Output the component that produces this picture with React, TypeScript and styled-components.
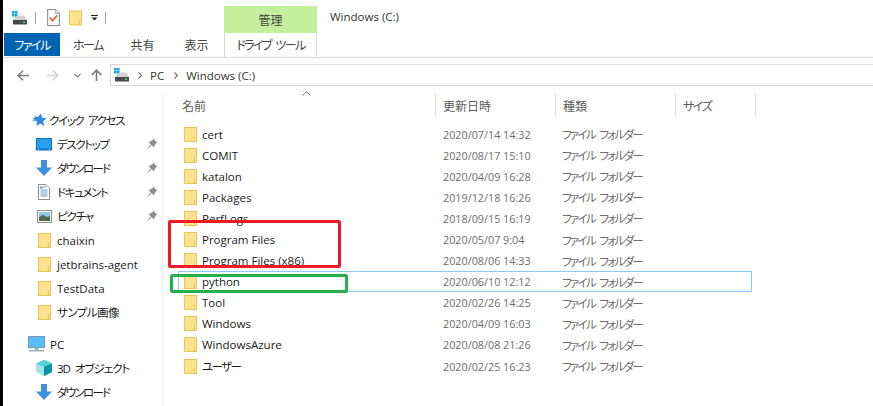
import styled, { createGlobalStyle } from "styled-components";

const GlobalStyle = createGlobalStyle`
    html, body {
        margin: 0;
        padding: 0;
        background: #ffffff;
    }
    body {
        font-family: "Open Sans", "Noto Sans CJK JP", sans-serif;
        font-size: 11.5px;
        font-feature-settings: "palt";
        color: #1a1a1a;
    }
`

const files = [
    { name: "cert", date: "2020/07/14 14:32" },
    { name: "COMIT", date: "2020/08/17 15:10" },
    { name: "katalon", date: "2020/04/09 16:28" },
    { name: "Packages", date: "2019/12/18 16:26" },
    { name: "PerfLogs", date: "2018/09/15 16:19" },
    { name: "Program Files", date: "2020/05/07 9:04" },
    { name: "Program Files (x86)", date: "2020/08/06 14:33" },
    { name: "python", date: "2020/06/10 12:12", selected: true },
    { name: "Tool", date: "2020/02/26 14:25" },
    { name: "Windows", date: "2020/04/09 16:03" },
    { name: "WindowsAzure", date: "2020/08/08 21:26" },
    { name: "ユーザー", date: "2020/02/25 16:23", kana: true },
];

function DriveIcon() {
    return (
        <svg width="16" height="14" viewBox="0 0 16 14">
            <rect x="0" y="0" width="2.6" height="2.6" fill="#18a5ef" />
            <rect x="3" y="0" width="2.6" height="2.6" fill="#18a5ef" />
            <rect x="0" y="3" width="2.6" height="2.6" fill="#18a5ef" />
            <rect x="3" y="3" width="2.6" height="2.6" fill="#18a5ef" />
            <path d="M3 6.5 L6.5 4.5 H12.5 L15 9 H1 Z" fill="#d3d3d3" />
            <rect x="1" y="9" width="14" height="4.5" fill="#4a4a4a" />
            <rect x="11" y="10.5" width="2" height="1.5" fill="#3fdc4a" />
        </svg>
    );
}

function CheckDocIcon() {
    return (
        <svg width="13" height="17" viewBox="0 0 12 16">
            <path d="M0.5 0.5 H8 L11.5 4 V15.5 H0.5 Z" fill="#ffffff" stroke="#8a8a8a" />
            <path d="M8 0.5 V4 H11.5" fill="#e8e8e8" stroke="#a5a5a5" />
            <path d="M2.5 8 L5 11 L9.5 6" fill="none" stroke="#e8622c" strokeWidth="1.5" />
        </svg>
    );
}

function FolderIcon({ width = 13, height = 15 }: { width?: number; height?: number }) {
    return (
        <svg width={width} height={height} viewBox="0 0 13 15">
            <rect x="0.5" y="0.5" width="12" height="14" fill="#fde28f" stroke="#eac552" />
            <path d="M10.5 14.5 V10 H12.5" fill="#fff4c8" stroke="#eac552" />
        </svg>
    );
}

function StarIcon() {
    return (
        <svg width="16" height="14" viewBox="0 0 16 14">
            <path d="M9.8 0.5 L11.2 4.8 L15.5 5.2 L12.2 8.2 L13.2 13 L9.3 10.4 L5.2 13 L6.3 8.2 L3.5 7.6 L0.5 8.4 L3.8 6 L1 5.4 L4.6 4.6 L2.6 2.8 L7 4 Z" fill="#2f8ade" />
        </svg>
    );
}

function DesktopIcon() {
    return (
        <svg width="16" height="13" viewBox="0 0 16 13">
            <rect x="0" y="0" width="16" height="12.5" fill="#0d6fc0" />
            <rect x="1" y="1" width="14" height="9.5" fill="#28a0f0" />
            <rect x="2" y="11" width="1" height="1" fill="#cfe8fb" />
            <rect x="13" y="11" width="1" height="1" fill="#cfe8fb" />
        </svg>
    );
}

function DownloadIcon() {
    return (
        <svg width="16" height="16" viewBox="0 0 16 16">
            <path d="M5 0 H11 V7.5 H16 L8 16 L0 7.5 H5 Z" fill="#3e8fdc" />
        </svg>
    );
}

function DocumentIcon() {
    return (
        <svg width="12" height="16" viewBox="0 0 12 16">
            <path d="M0.5 0.5 H8 L11.5 4 V15.5 H0.5 Z" fill="#ffffff" stroke="#8f8f8f" />
            <path d="M5 3 H8 M2.5 6 H9.5 M2.5 8 H9.5 M2.5 10 H9.5 M2.5 12 H9.5" stroke="#5aa0d8" />
            <rect x="2" y="2.5" width="2.5" height="2" fill="#4a9bd8" />
        </svg>
    );
}

function PictureIcon() {
    return (
        <svg width="15" height="13" viewBox="0 0 15 13">
            <rect x="0.5" y="0.5" width="14" height="12" fill="#ffffff" stroke="#8f8f8f" />
            <rect x="2" y="2" width="11" height="5" fill="#8fc6ea" />
            <path d="M2 7 L6 5 L10 7 L13 6 V11 H2 Z" fill="#4c6b4a" />
        </svg>
    );
}

function PinIcon() {
    return (
        <svg width="12" height="12" viewBox="0 0 11 11">
            <path d="M6.5 0.5 L10.5 4.5 L9 5 L7.5 7.5 L7.5 9 L2 3.5 L3.5 3.5 L6 2 Z" fill="#8f8f8f" />
            <path d="M3.8 6.2 L0.5 10.5 L4.8 7.2 Z" fill="#8f8f8f" />
        </svg>
    );
}

function MonitorIcon() {
    return (
        <svg width="17" height="16" viewBox="0 0 17 16">
            <rect x="0.5" y="0.5" width="16" height="11" fill="#57bdf5" stroke="#7d99ad" />
            <rect x="6.5" y="12" width="4" height="2" fill="#a3b3bf" />
            <rect x="1" y="14" width="15" height="1.5" fill="#9fb1bf" />
        </svg>
    );
}

function CubeIcon() {
    return (
        <svg width="16" height="16" viewBox="0 0 16 16">
            <path d="M8 0 L16 3.5 V12 L8 16 Z" fill="#1ba6b8" />
            <path d="M8 0 L0 3.5 V12 L8 16 Z" fill="#9fe6e6" />
            <path d="M0 3.5 L8 7 L16 3.5 L8 0 Z" fill="#55cfd8" />
            <path d="M8 7 V16 L16 12 V3.5 Z" fill="#0f93a8" />
        </svg>
    );
}

function ArrowIcon({ flip, color }: { flip?: boolean; color: string }) {
    return (
        <svg width="12" height="11" viewBox="0 0 12 11" style={flip ? { transform: "scaleX(-1)" } : undefined}>
            <path d="M6 0.8 L1.2 5.5 L6 10.2 M1.2 5.5 H12" fill="none" stroke={color} strokeWidth="1.6" />
        </svg>
    );
}

function UpIcon() {
    return (
        <svg width="11" height="12" viewBox="0 0 11 12">
            <path d="M0.8 6 L5.5 1.2 L10.2 6 M5.5 1.2 V12" fill="none" stroke="#7a7a7a" strokeWidth="1.6" />
        </svg>
    );
}

function ChevronDown() {
    return (
        <svg width="7" height="5" viewBox="0 0 7 5">
            <path d="M0.5 0.8 L3.5 3.8 L6.5 0.8" fill="none" stroke="#808080" strokeWidth="1.2" />
        </svg>
    );
}

function BreadcrumbSep() {
    return (
        <svg width="4" height="7" viewBox="0 0 4 7">
            <path d="M0.5 0.5 L3.5 3.5 L0.5 6.5" fill="none" stroke="#707070" strokeWidth="1.1" />
        </svg>
    );
}

function QuickDropdown() {
    return (
        <svg width="7" height="6" viewBox="0 0 7 6">
            <rect x="0" y="0" width="7" height="1" fill="#222222" />
            <path d="M0.5 2.5 H6.5 L3.5 5.5 Z" fill="#222222" />
        </svg>
    );
}

function SortUp() {
    return (
        <svg width="9" height="5" viewBox="0 0 9 5">
            <path d="M0.5 4.5 L4.5 0.8 L8.5 4.5" fill="none" stroke="#7a7a7a" />
        </svg>
    );
}

export default function App() {
    return (
        <Page>
            <GlobalStyle />
            <BlackStrip />
            <Explorer>
                <TitleBar>
                    <QuickAccess>
                        <DriveIcon />
                        <ToolbarSep $after={4} />
                        <QuickGroup>
                            <CheckDocIcon />
                            <FolderIcon width={13} height={16} />
                            <QuickDropdown />
                        </QuickGroup>
                        <ToolbarSep />
                    </QuickAccess>
                    <ContextTab>管理</ContextTab>
                    <WindowTitle>Windows (C:)</WindowTitle>
                </TitleBar>
                <RibbonTabs>
                    <FileTab>ファイル</FileTab>
                    <RibbonTab $width={56} $spacing={-1.5}>ホーム</RibbonTab>
                    <RibbonTab $width={53}>共有</RibbonTab>
                    <RibbonTab $width={55}>表示</RibbonTab>
                    <DriveTab>ドライブ ツール</DriveTab>
                </RibbonTabs>
                <AddressRow>
                    <NavButtons>
                        <ArrowIcon color="#7f7f7f" />
                        <ForwardSlot><ArrowIcon flip color="#d2d2d2" /></ForwardSlot>
                        <ChevronDown />
                        <UpSlot><UpIcon /></UpSlot>
                    </NavButtons>
                    <AddressBox>
                        <DriveIcon />
                        <BreadcrumbSep />
                        <Crumb>PC</Crumb>
                        <BreadcrumbSep />
                        <Crumb>Windows (C:)</Crumb>
                    </AddressBox>
                </AddressRow>
                <Body>
                    <Sidebar>
                        <NavRow $indent={28} $gap={2}><StarIcon /><NavLabel $spacing={-1.4}>クイック アクセス</NavLabel></NavRow>
                        <NavRow $indent={33}><IconSlot><DesktopIcon /></IconSlot><NavLabel $spacing={-1.4}>デスクトップ</NavLabel><PinIcon /></NavRow>
                        <NavRow $indent={33}><IconSlot><DownloadIcon /></IconSlot><NavLabel $spacing={-1.7}>ダウンロード</NavLabel><PinIcon /></NavRow>
                        <NavRow $indent={33}><IconSlot><DocumentIcon /></IconSlot><NavLabel $spacing={-1.4}>ドキュメント</NavLabel><PinIcon /></NavRow>
                        <NavRow $indent={33}><IconSlot><PictureIcon /></IconSlot><NavLabel $spacing={-1.2}>ピクチャ</NavLabel><PinIcon /></NavRow>
                        <NavRow $indent={33}><IconSlot><FolderIcon /></IconSlot><NavLabel>chaixin</NavLabel></NavRow>
                        <NavRow $indent={33}><IconSlot><FolderIcon /></IconSlot><NavLabel>jetbrains-agent</NavLabel></NavRow>
                        <NavRow $indent={33}><IconSlot><FolderIcon /></IconSlot><NavLabel>TestData</NavLabel></NavRow>
                        <NavRow $indent={33}><IconSlot><FolderIcon /></IconSlot><NavLabel $spacing={-0.5}>サンプル画像</NavLabel></NavRow>
                        <NavSpacer />
                        <NavRow $indent={25}><IconSlot><MonitorIcon /></IconSlot><NavLabel>PC</NavLabel></NavRow>
                        <NavRow $indent={33}><IconSlot><CubeIcon /></IconSlot><NavLabel $spacing={-1}>3D オブジェクト</NavLabel></NavRow>
                        <NavRow $indent={33}><IconSlot><DownloadIcon /></IconSlot><NavLabel $spacing={-1.7}>ダウンロード</NavLabel></NavRow>
                    </Sidebar>
                    <FileList>
                        <HeaderRow>
                            <HeaderCell $width={261}>名前<SortMark><SortUp /></SortMark></HeaderCell>
                            <HeaderCell $width={120}>更新日時</HeaderCell>
                            <HeaderCell $width={120}>種類</HeaderCell>
                            <HeaderCell $width={80} $spacing={-1.5}>サイズ</HeaderCell>
                        </HeaderRow>
                        <Rows>
                            {files.map(file => (
                                <FileRow key={file.name} $selected={file.selected}>
                                    <NameCell $spacing={file.kana ? -1.6 : 0}><FolderIcon />{file.name}</NameCell>
                                    <DateCell>{file.date}</DateCell>
                                    <TypeCell>ファイル フォルダー</TypeCell>
                                </FileRow>
                            ))}
                        </Rows>
                    </FileList>
                </Body>
            </Explorer>
            <RedMark />
            <GreenMark />
        </Page>
    )
};

const Page = styled.div`
    position: relative;
    display: flex;
    width: 873px;
    height: 406px;
    overflow: hidden;
    background: #ffffff;
`

const BlackStrip = styled.div`
    flex: 0 0 3px;
    background: #000000;
`

const Explorer = styled.div`
    flex: 1;
    min-width: 0;
    display: flex;
    flex-direction: column;
`

const TitleBar = styled.div`
    flex: 0 0 33px;
    display: flex;
    align-items: flex-end;
`

const QuickAccess = styled.div`
    flex: 0 0 221px;
    height: 33px;
    display: flex;
    align-items: center;
    padding: 2px 0 0 9px;
    box-sizing: border-box;
    gap: 7px;
`

const QuickGroup = styled.div`
    display: flex;
    align-items: center;
    gap: 9px;
`

const ToolbarSep = styled.div<{ $after?: number }>`
    width: 1px;
    height: 12px;
    margin-right: ${props => props.$after ?? 0}px;
    background: #a0a0a0;
`

const ContextTab = styled.div`
    flex: 0 0 93px;
    height: 27px;
    display: flex;
    align-items: center;
    justify-content: center;
    background: #c4f09e;
    color: #444444;
    font-size: 12px;
`

const WindowTitle = styled.div`
    height: 33px;
    line-height: 33px;
    margin-left: 13px;
    color: #333333;
`

const RibbonTabs = styled.div`
    flex: 0 0 25px;
    display: flex;
    padding-left: 1px;
    border-bottom: 1px solid #d9d9d9;
    box-sizing: border-box;
    font-size: 12px;
`

const FileTab = styled.div`
    flex: 0 0 56px;
    height: 23px;
    display: flex;
    align-items: center;
    justify-content: center;
    letter-spacing: -1.5px;
    background: #0063b1;
    color: #ffffff;
`

const RibbonTab = styled.div<{ $width: number; $spacing?: number }>`
    flex: 0 0 ${props => props.$width}px;
    height: 23px;
    display: flex;
    align-items: center;
    justify-content: center;
    letter-spacing: ${props => props.$spacing ?? 0}px;
    color: #444444;
`

const DriveTab = styled.div`
    flex: 0 0 93px;
    height: 24px;
    display: flex;
    align-items: center;
    justify-content: center;
    box-sizing: border-box;
    letter-spacing: -1.6px;
    word-spacing: 3px;
    border-left: 1px solid #d9d9d9;
    border-right: 1px solid #d9d9d9;
    color: #444444;
`

const AddressRow = styled.div`
    flex: 0 0 35px;
    display: flex;
    align-items: flex-start;
    padding-top: 6px;
    box-sizing: border-box;
`

const NavButtons = styled.div`
    flex: 0 0 107px;
    height: 22px;
    display: flex;
    align-items: center;
    padding-left: 14px;
    box-sizing: border-box;
`

const ForwardSlot = styled.div`
    display: flex;
    margin: 0 15px 0 18px;
`

const UpSlot = styled.div`
    display: flex;
    margin-left: 10px;
`

const AddressBox = styled.div`
    flex: 1;
    height: 22px;
    display: flex;
    align-items: center;
    gap: 8px;
    padding-left: 3px;
    box-sizing: border-box;
    border: 1px solid #d9d9d9;
    border-right: none;
`

const Crumb = styled.span`
    padding-right: 2px;
    color: #333333;
`

const Body = styled.div`
    flex: 1;
    min-height: 0;
    display: flex;
`

const Sidebar = styled.div`
    flex: 0 0 160px;
    box-sizing: border-box;
    padding-top: 15px;
    border-right: 1px solid #f2f2f2;
    display: flex;
    flex-direction: column;
`

const NavRow = styled.div<{ $indent: number; $gap?: number }>`
    flex: 0 0 24px;
    display: flex;
    align-items: center;
    gap: ${props => props.$gap ?? 5}px;
    padding-left: ${props => props.$indent}px;
    padding-right: 4px;
    color: #1a1a1a;
`

const IconSlot = styled.div`
    flex: 0 0 16px;
    display: flex;
    justify-content: center;
`

const NavLabel = styled.span<{ $spacing?: number }>`
    flex: 1;
    white-space: nowrap;
    letter-spacing: ${props => props.$spacing ?? 0}px;
    word-spacing: 3px;
`

const NavSpacer = styled.div`
    flex: 0 0 8px;
`

const FileList = styled.div`
    flex: 1;
    min-width: 0;
`

const HeaderRow = styled.div`
    display: flex;
    height: 25px;
    padding-left: 12px;
    font-size: 12px;
`

const HeaderCell = styled.div<{ $width: number; $spacing?: number }>`
    position: relative;
    flex: 0 0 ${props => props.$width}px;
    box-sizing: border-box;
    padding-left: 7px;
    display: flex;
    align-items: center;
    letter-spacing: ${props => props.$spacing ?? 0}px;
    border-right: 1px solid #e5e5e5;
    color: #5a5a5a;
`

const SortMark = styled.span`
    position: absolute;
    top: -2px;
    left: 127px;
    display: flex;
`

const Rows = styled.div`
    padding: 5.5px 0 0 15px;
`

const FileRow = styled.div<{ $selected?: boolean }>`
    display: grid;
    grid-template-columns: 258px 120px 120px 76px;
    width: 574px;
    height: 21.1px;
    align-items: center;
    box-shadow: ${props => props.$selected ? "inset 0 0 0 1px #8ccbff" : "none"};
`

const NameCell = styled.div<{ $spacing?: number }>`
    display: flex;
    align-items: center;
    gap: 5px;
    padding-left: 6px;
    letter-spacing: ${props => props.$spacing ?? 0}px;
    color: #1a1a1a;
    white-space: nowrap;
`

const DateCell = styled.div`
    padding-left: 7px;
    font-size: 10.8px;
    color: #6d6d6d;
    white-space: nowrap;
`

const TypeCell = styled.div`
    padding-left: 6px;
    letter-spacing: -1.7px;
    word-spacing: 3px;
    color: #6d6d6d;
    white-space: nowrap;
`

const RedMark = styled.div`
    position: absolute;
    left: 168px;
    top: 220px;
    width: 173px;
    height: 48px;
    box-sizing: border-box;
    border: 3px solid #ed1c24;
    border-radius: 2px;
`

const GreenMark = styled.div`
    position: absolute;
    left: 170px;
    top: 274px;
    width: 178px;
    height: 19px;
    box-sizing: border-box;
    border: 3px solid #22b14c;
    border-radius: 2px;
`
